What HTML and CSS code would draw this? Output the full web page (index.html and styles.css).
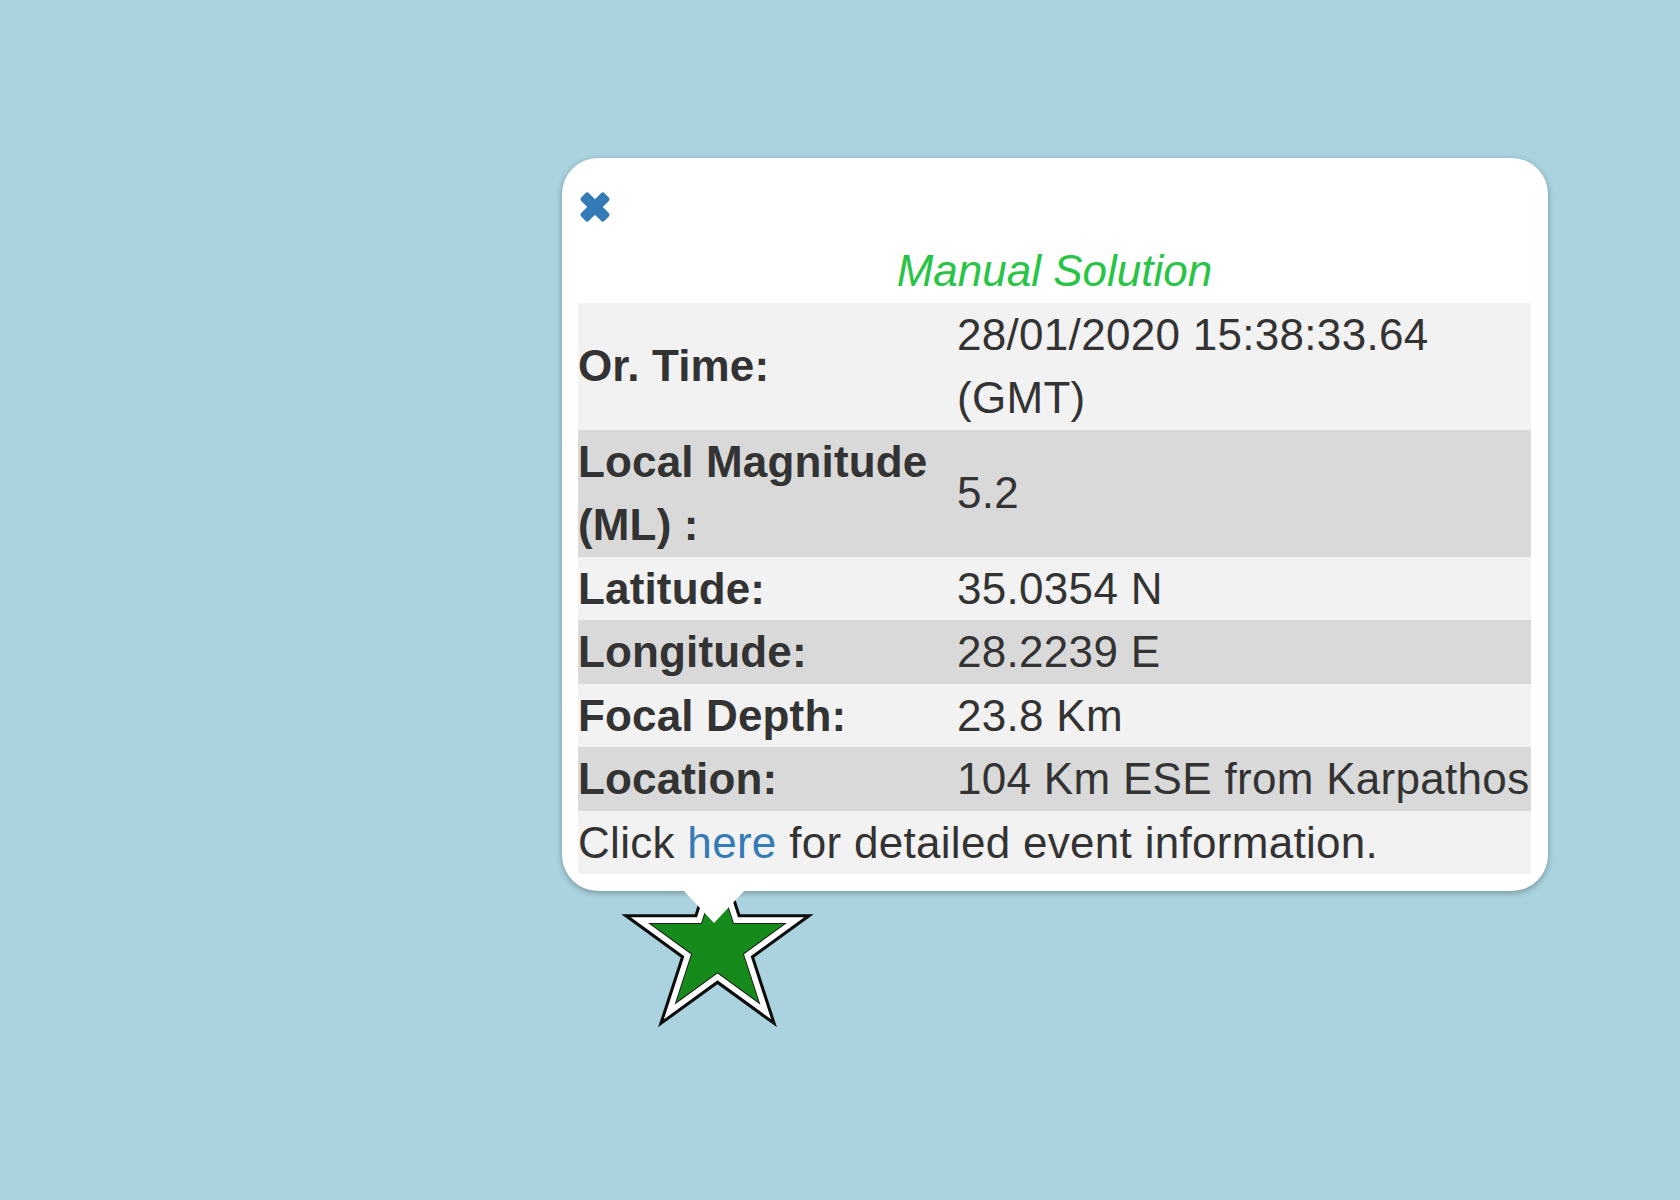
FILE: index.html
```html
<!DOCTYPE html>
<html lang="en">
<head>
<meta charset="utf-8">
<title>Event popup</title>
<link rel="stylesheet" href="styles.css">
</head>
<body>
<div class="map">
  <svg class="marker" width="211" height="192" viewBox="0 0 211 192" aria-hidden="true">
    <defs>
      <polygon id="star" points="0,-100 22.4514,-30.9017 95.1057,-30.9017 36.3271,11.8034 58.7785,80.9017 0,38.1966 -58.7785,80.9017 -36.3271,11.8034 -95.1057,-30.9017 -22.4514,-30.9017"/>
    </defs>
    <g transform="translate(105.5 105.5)">
      <use href="#star" transform="scale(1.012)" fill="#0d0d0d"/>
      <use href="#star" transform="scale(0.912)" fill="#ffffff"/>
      <use href="#star" transform="scale(0.731)" fill="#1e1e1e"/>
      <use href="#star" transform="scale(0.699)" fill="#168a1b"/>
    </g>
  </svg>

  <div class="popup">
    <div class="close-row">
      <svg class="close" width="32" height="32" viewBox="0 0 32 32" aria-label="Close">
        <rect x="-0.5" y="10.5" width="33" height="11" rx="2.5" transform="rotate(45 16 16)"/>
        <rect x="-0.5" y="10.5" width="33" height="11" rx="2.5" transform="rotate(-45 16 16)"/>
      </svg>
    </div>
    <div class="title">Manual Solution</div>
    <table class="info">
      <colgroup><col class="c-label"><col></colgroup>
      <tr class="light"><td class="label">Or. Time:</td><td class="value">28/01/2020 15:38:33.64 (GMT)</td></tr>
      <tr class="dark"><td class="label">Local Magnitude (ML) :</td><td class="value">5.2</td></tr>
      <tr class="light"><td class="label">Latitude:</td><td class="value">35.0354 N</td></tr>
      <tr class="dark"><td class="label">Longitude:</td><td class="value">28.2239 E</td></tr>
      <tr class="light"><td class="label">Focal Depth:</td><td class="value">23.8 Km</td></tr>
      <tr class="dark"><td class="label">Location:</td><td class="value">104 Km ESE from Karpathos</td></tr>
      <tr class="light"><td class="value" colspan="2">Click <a href="#" class="link">here</a> for detailed event information.</td></tr>
    </table>
  </div>
</div>
</body>
</html>
```

FILE: styles.css
```css
html, body {
  margin: 0;
  padding: 0;
}

body {
  background: #aad3df;
  font-family: "Liberation Sans", Arial, Helvetica, sans-serif;
  color: #333;
  overflow: hidden;
}

.map {
  position: relative;
  width: 1680px;
  height: 1200px;
  background: #aad3df;
}

.marker {
  position: absolute;
  left: 612px;
  top: 840px;
  display: block;
}

.popup {
  position: absolute;
  left: 562px;
  top: 158px;
  width: 986px;
  box-sizing: border-box;
  padding: 16px 17px 17px 16px;
  background: #fff;
  border-radius: 36px;
  box-shadow: 0 2px 6px rgba(0, 0, 0, 0.3);
}

.popup::after {
  content: "";
  position: absolute;
  left: 121px;
  top: calc(100% - 1px);
  width: 0;
  height: 0;
  border-left: 31px solid transparent;
  border-right: 31px solid transparent;
  border-top: 33px solid #fff;
}

.close-row {
  height: 65px;
  display: flex;
  align-items: center;
}

.close {
  display: block;
  margin-left: 1px;
  fill: #337ab7;
}

.title {
  font-size: 44px;
  line-height: 63.5px;
  font-style: italic;
  color: #27c445;
  text-align: center;
}

.info {
  width: 100%;
  table-layout: fixed;
  border-collapse: collapse;
  border-spacing: 0;
  font-size: 44px;
  line-height: 63.5px;
}

.c-label {
  width: 379px;
}

.info td {
  padding: 0;
  vertical-align: middle;
}

.info .label {
  font-weight: bold;
  letter-spacing: 0.15px;
}

.info .value {
  letter-spacing: 0.3px;
}

.light {
  background: #f2f2f2;
}

.dark {
  background: #d9d9d9;
}

.link {
  color: #337ab7;
  text-decoration: none;
}
```
